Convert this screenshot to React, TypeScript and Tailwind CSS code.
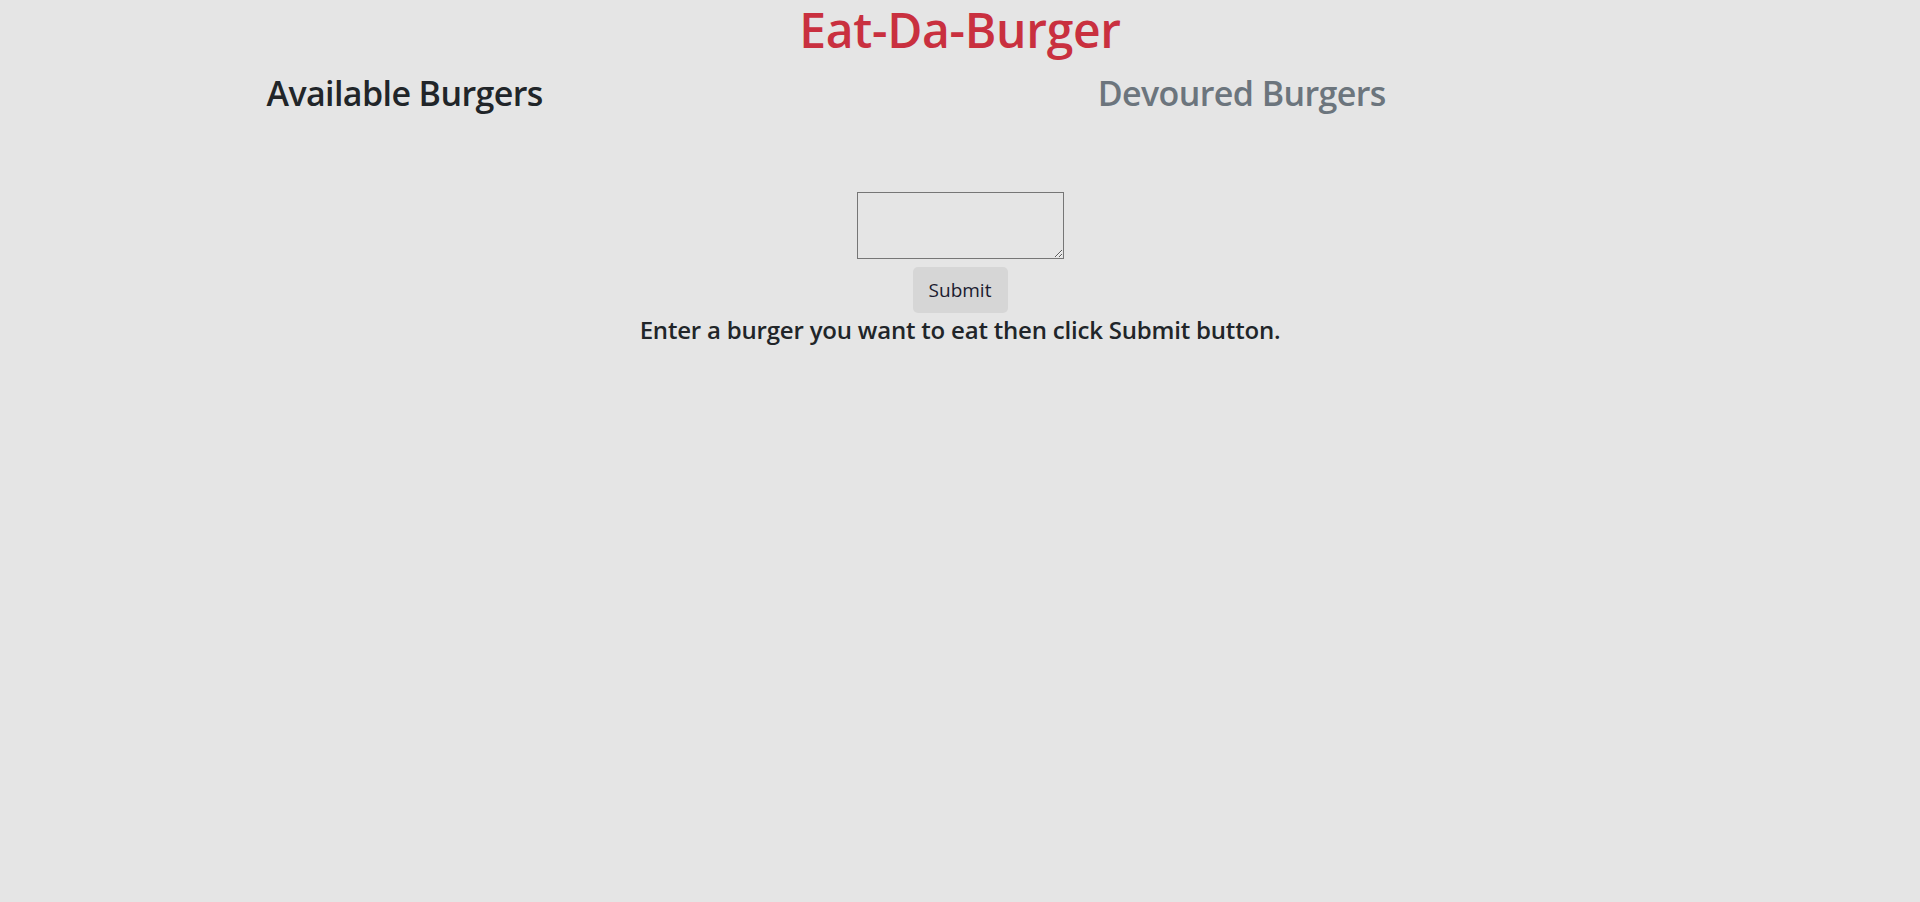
import React from "react";

const font = { fontFamily: '"Open Sans", "Noto Sans", sans-serif' };

const App = () => {
  return (
    <div className="min-h-[902px] w-full bg-[#e5e5e5] text-[#212529]" style={font}>
      <div className="mx-auto w-[1425px]">
        <h1 className="text-center text-[48px] font-semibold leading-[60px] text-[#c9303f] mb-[10px] tracking-[-0.3px]">
          Eat-Da-Burger
        </h1>

        {/* columns */}
        <div className="flex">
          <div className="w-7/12 px-[19px]">
            <h2 className="text-[34px] font-semibold leading-[46px] tracking-[-0.6px]">Available Burgers</h2>
          </div>
          <div className="w-5/12 px-[19px]">
            <h2 className="text-[34px] font-semibold leading-[46px] text-[#6c757d] tracking-[-0.6px]">
              Devoured Burgers
            </h2>
          </div>
        </div>

        {/* form */}
        <div className="flex flex-col items-center mt-[76px]">
          <textarea className="w-[207px] h-[67px] border border-[#767676] bg-transparent resize-y" />
          <button className="mt-[8px] h-[46px] w-[95px] rounded-[5px] bg-[#d6d6d6] text-[19px] text-[#1b1b2f]">
            Submit
          </button>
          <p className="mt-[2px] text-[24px] font-semibold leading-[30px] tracking-[-0.2px]">
            Enter a burger you want to eat then click Submit button.
          </p>
        </div>
      </div>
    </div>
  );
};

export default App;
